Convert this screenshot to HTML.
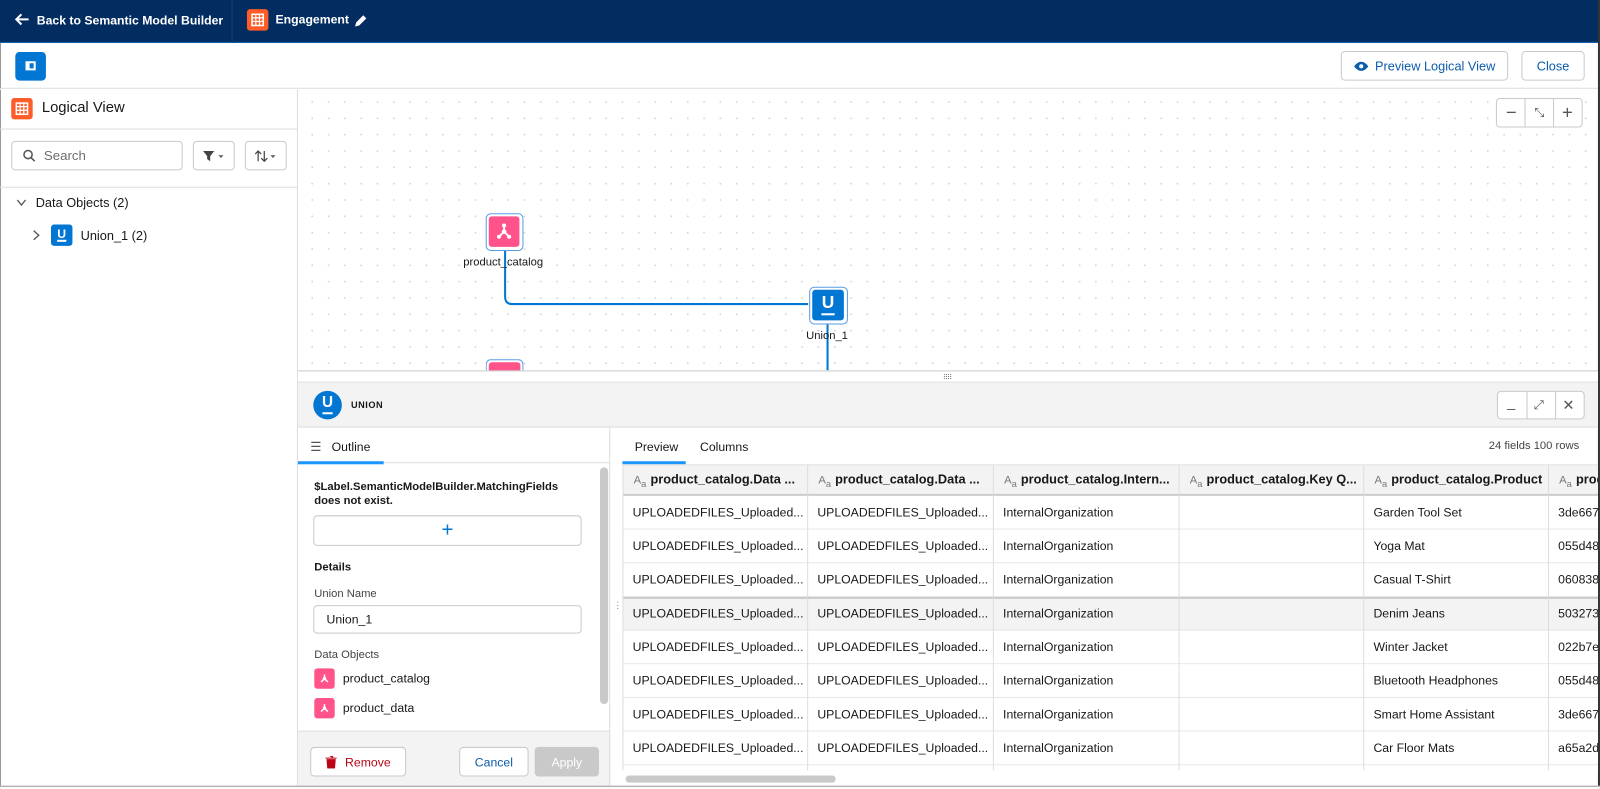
<!DOCTYPE html>
<html><head><meta charset="utf-8">
<style>
*{box-sizing:border-box;margin:0;padding:0}
body{width:1600px;height:788px;overflow:hidden;font-family:"Liberation Sans",sans-serif;color:#181818;background:#fff;position:relative;font-size:13px}
#w{position:absolute;left:0;top:0;width:1568px;height:773px;transform:scale(1.0204);transform-origin:0 0;overflow:hidden}
.a{position:absolute}
.btn{position:absolute;border:1px solid #c9c9c9;border-radius:4px;background:#fff;display:flex;align-items:center;justify-content:center}
.th{position:absolute;top:0;height:30px;border-right:1px solid #ddd;padding-left:10px;line-height:30px;font-weight:bold;font-size:12.5px;white-space:nowrap;overflow:hidden}
.th small{font-weight:normal;color:#777;font-size:11px;margin-right:4px}
.td{position:absolute;height:33px;line-height:33px;border-right:1px solid #ddd;padding-left:9px;font-size:12px;white-space:nowrap;overflow:hidden}
.row{position:absolute;left:0;width:1000px;height:33px;border-bottom:1px solid #e5e5e5}
</style></head><body><div id="w">
<div class="a" style="left:0;top:0;width:1568px;height:42px;background:#032d60;border-bottom:1px solid #0b5cab"></div>
<div class="a" style="left:14px;top:11px;color:#fff;font-size:12px;font-weight:bold;line-height:18px">
<svg width="16" height="14" viewBox="0 0 16 14" style="vertical-align:-2px;margin-right:6px"><path d="M14 7H3M7 2L2 7l5 5" stroke="#fff" stroke-width="2" fill="none"/></svg>Back to Semantic Model Builder</div>
<div class="a" style="left:227px;top:0;width:1px;height:42px;background:#163f73"></div>
<div class="a" style="left:242px;top:9px;width:21px;height:21px;background:#fe5c28;border-radius:3px">
<svg width="21" height="21" viewBox="0 0 21 21"><rect x="5" y="5" width="11" height="11" fill="none" stroke="#fff" stroke-width="1.5"/><path d="M5 8.5h11M5 12h11M8.7 5v11M12.3 5v11" stroke="#fff" stroke-width="1.2"/></svg></div>
<div class="a" style="left:270px;top:12px;color:#fff;font-weight:bold;font-size:12px">Engagement</div>
<svg class="a" style="left:347px;top:14px" width="13" height="13" viewBox="0 0 13 13"><path d="M1 12l1-4 7-7 3 3-7 7z" fill="#fff"/></svg>
<div class="a" style="left:0;top:42px;width:1568px;height:45px;border-bottom:1px solid #ddd;border-left:1px solid #999"></div>
<div class="a" style="left:15px;top:51px;width:30px;height:28px;background:#0176d3;border-radius:4px"><div class="a" style="left:10px;top:9px;width:10px;height:9px;border:2px solid #fff;border-left-width:4px"></div></div>
<div class="btn" style="left:1314px;top:50px;width:164px;height:29px;color:#0b5cab;font-size:12.5px"><svg width="14" height="10" viewBox="0 0 14 10" style="margin-right:7px"><path d="M0 5q7-9 14 0q-7 9-14 0z" fill="#0b5cab"/><circle cx="7" cy="5" r="2" fill="#fff"/></svg>Preview Logical View</div>
<div class="btn" style="left:1491px;top:50px;width:62px;height:29px;color:#0b5cab;font-size:12.5px">Close</div>
<div class="a" style="left:0;top:88px;width:292px;height:700px;border-right:1px solid #ddd;border-left:1px solid #999"></div>
<div class="a" style="left:11px;top:96px;width:21px;height:21px;background:#fe5c28;border-radius:3px">
<svg width="21" height="21" viewBox="0 0 21 21"><rect x="5" y="5" width="11" height="11" fill="none" stroke="#fff" stroke-width="1.5"/><path d="M5 8.5h11M5 12h11M8.7 5v11M12.3 5v11" stroke="#fff" stroke-width="1.2"/></svg></div>
<div class="a" style="left:41px;top:98px;font-size:14.5px">Logical View</div>
<div class="a" style="left:0;top:126px;width:291px;height:1px;background:#ddd"></div>
<div class="btn" style="left:11px;top:138px;width:168px;height:29px;justify-content:flex-start;padding-left:10px;color:#706e6b"><svg width="13" height="13" viewBox="0 0 13 13" style="margin-right:8px"><circle cx="5.5" cy="5.5" r="4" stroke="#555" stroke-width="1.5" fill="none"/><path d="M8.5 8.5l3.5 3.5" stroke="#555" stroke-width="1.5"/></svg>Search</div>
<div class="btn" style="left:189px;top:138px;width:41px;height:29px"><svg width="22" height="10" viewBox="0 0 22 10"><path d="M0 0h11l-4 5v5l-3-2v-3z" fill="#444"/><path d="M15 4h5l-2.5 3z" fill="#666"/></svg></div>
<div class="btn" style="left:240px;top:138px;width:41px;height:29px"><svg width="22" height="12" viewBox="0 0 22 12"><path d="M3 11V1M0 4l3-3 3 3M9 1v10M6 8l3 3 3-3" stroke="#444" stroke-width="1.2" fill="none"/><path d="M15 5h5l-2.5 3z" fill="#666"/></svg></div>
<div class="a" style="left:0;top:183px;width:291px;height:1px;background:#ddd"></div>
<svg class="a" style="left:16px;top:195px" width="10" height="8" viewBox="0 0 10 8"><path d="M1 1l4 5 4-5" stroke="#555" stroke-width="1.3" fill="none"/></svg>
<div class="a" style="left:35px;top:192px;font-size:12.5px">Data Objects (2)</div>
<svg class="a" style="left:32px;top:225px" width="8" height="11" viewBox="0 0 8 11"><path d="M1 1l5 4.5L1 10" stroke="#555" stroke-width="1.3" fill="none"/></svg>
<div class="a" style="left:50px;top:220px;width:21px;height:21px;background:#0176d3;border-radius:3px;color:#fff;text-align:center;font-weight:bold;font-size:12px;line-height:18px">U<div class="a" style="left:6px;top:15px;width:9px;height:1.5px;background:#fff"></div></div>
<div class="a" style="left:79px;top:224px;font-size:12.5px">Union_1 (2)</div>
<div class="a" style="left:292px;top:88px;width:1274px;height:275px;background-image:radial-gradient(circle,#d6d6d6 0.8px,transparent 1.1px);background-size:16px 16px;background-position:6px 4px"></div>
<div class="a" style="left:1566px;top:0;width:2px;height:773px;background:#333"></div>
<div class="btn" style="left:1466px;top:96px;width:85px;height:29px;justify-content:space-around;color:#555;font-size:18px"><span>−</span><span style="font-size:12px">⤡</span><span>+</span></div>
<div class="a" style="left:1494px;top:96px;width:1px;height:29px;background:#c9c9c9"></div>
<div class="a" style="left:1522px;top:96px;width:1px;height:29px;background:#c9c9c9"></div>
<svg class="a" style="left:292px;top:88px" width="1275" height="275"><path d="M203 157v46q0 7 7 7h290M519 229v46" stroke="#0176d3" stroke-width="2" fill="none"/></svg>
<div class="a" style="left:476px;top:209px;width:37px;height:37px;border:1.5px solid #5a9be6;border-radius:5px;background:#fff;padding:2px"><div style="width:30px;height:30px;background:#ff538a;border-radius:3px"><svg width="30" height="30" viewBox="0 0 30 30"><path d="M15 9v6l-5 5M15 15l5 5" stroke="#fff" stroke-width="1.8" fill="none"/><circle cx="15" cy="9" r="2" fill="#fff"/><circle cx="15" cy="15" r="2.3" fill="#fff"/><circle cx="10" cy="20" r="2" fill="#fff"/><circle cx="20" cy="20" r="2" fill="#fff"/></svg></div></div>
<div class="a" style="left:454px;top:251px;font-size:11px">product_catalog</div>
<div class="a" style="left:793px;top:281px;width:38px;height:37px;border:1.5px solid #5a9be6;border-radius:5px;background:#fff;padding:2px"><div style="width:31px;height:30px;background:#0176d3;border-radius:3px;color:#fff;text-align:center;font-weight:bold;font-size:17px;line-height:25px;position:relative">U<div class="a" style="left:9px;top:23px;width:13px;height:2px;background:#fff"></div></div></div>
<div class="a" style="left:790px;top:323px;font-size:11px">Union_1</div>
<div class="a" style="left:476px;top:352px;width:37px;height:12px;border:1.5px solid #5a9be6;border-bottom:none;border-radius:5px 5px 0 0;background:#fff;padding:2px 2px 0"><div style="height:10px;background:#ff538a;border-radius:3px 3px 0 0"></div></div>
<div class="a" style="left:292px;top:363px;width:1274px;height:12px;background:#fff;border-top:1px solid #ccc;border-bottom:1px solid #ddd"></div>
<div class="a" style="left:924px;top:366px;font-size:7px;color:#777;letter-spacing:-1px">⠿⠿</div>
<div class="a" style="left:292px;top:375px;width:1274px;height:44px;background:#f3f3f3;border-bottom:1px solid #ddd"></div>
<div class="a" style="left:307px;top:383px;width:28px;height:28px;background:#0176d3;border-radius:50%;color:#fff;text-align:center;font-weight:bold;font-size:15px;line-height:24px">U<div class="a" style="left:9px;top:21px;width:10px;height:1.5px;background:#fff"></div></div>
<div class="a" style="left:344px;top:392px;font-size:9px;font-weight:bold;letter-spacing:.5px">UNION</div>
<div class="btn" style="left:1467px;top:383px;width:86px;height:28px;justify-content:space-around;color:#555;font-size:14px"><span style="margin-top:-6px">_</span><span style="font-size:12px">⤢</span><span>✕</span></div>
<div class="a" style="left:1496px;top:383px;width:1px;height:28px;background:#c9c9c9"></div>
<div class="a" style="left:1524px;top:383px;width:1px;height:28px;background:#c9c9c9"></div>
<div class="a" style="left:292px;top:419px;width:306px;height:369px;border-right:1px solid #ddd"></div>
<div class="a" style="left:304px;top:431px;font-size:12px;color:#555">☰</div>
<div class="a" style="left:325px;top:431px;font-size:12px">Outline</div>
<div class="a" style="left:292px;top:453px;width:306px;height:1px;background:#ddd"></div>
<div class="a" style="left:292px;top:452px;width:84px;height:3px;background:#1b96ff"></div>
<div class="a" style="left:588px;top:458px;width:8px;height:232px;background:#c9c9c9;border-radius:4px"></div>
<div class="a" style="left:308px;top:470px;font-size:11px;font-weight:bold;line-height:14px">$Label.SemanticModelBuilder.MatchingFields<br>does not exist.</div>
<div class="btn" style="left:307px;top:505px;width:263px;height:30px;color:#0176d3;font-size:20px;font-weight:300">+</div>
<div class="a" style="left:308px;top:550px;font-size:11px;font-weight:bold">Details</div>
<div class="a" style="left:308px;top:576px;font-size:11px;color:#444">Union Name</div>
<div class="btn" style="left:307px;top:593px;width:263px;height:28px;justify-content:flex-start;padding-left:12px;font-size:12px">Union_1</div>
<div class="a" style="left:308px;top:636px;font-size:11px;color:#444">Data Objects</div>
<div class="a" style="left:308px;top:655px;width:20px;height:20px;background:#ff538a;border-radius:3px"><svg width="20" height="20" viewBox="0 0 30 30"><path d="M15 9v6l-5 5M15 15l5 5" stroke="#fff" stroke-width="2.2" fill="none"/><circle cx="15" cy="15" r="2.5" fill="#fff"/></svg></div>
<div class="a" style="left:336px;top:658px;font-size:12px">product_catalog</div>
<div class="a" style="left:308px;top:684px;width:20px;height:20px;background:#ff538a;border-radius:3px"><svg width="20" height="20" viewBox="0 0 30 30"><path d="M15 9v6l-5 5M15 15l5 5" stroke="#fff" stroke-width="2.2" fill="none"/><circle cx="15" cy="15" r="2.5" fill="#fff"/></svg></div>
<div class="a" style="left:336px;top:687px;font-size:12px">product_data</div>
<div class="a" style="left:292px;top:716px;width:306px;height:72px;background:#f3f3f3;border-top:1px solid #ddd;border-right:1px solid #ddd"></div>
<div class="btn" style="left:304px;top:732px;width:94px;height:29px;color:#ba0517;font-size:12px"><svg width="11" height="12" viewBox="0 0 11 12" style="margin-right:8px"><path d="M0 2h11M4 0h3v2M1.5 3.5h8l-.7 8.5H2.2z" fill="#ba0517" stroke="#ba0517" stroke-width="1"/></svg>Remove</div>
<div class="btn" style="left:450px;top:732px;width:68px;height:29px;color:#0b5cab;font-size:12px">Cancel</div>
<div class="btn" style="left:524px;top:732px;width:63px;height:29px;background:#c9c9c9;border-color:#c9c9c9;color:#fff;font-size:12px">Apply</div>
<div class="a" style="left:601px;top:588px;font-size:9px;color:#888">⋮</div>
<div class="a" style="left:622px;top:431px;font-size:12px">Preview</div>
<div class="a" style="left:686px;top:431px;font-size:12px">Columns</div>
<div class="a" style="left:610px;top:452px;width:62px;height:3px;background:#1b96ff"></div>
<div class="a" style="left:1459px;top:431px;font-size:11px;color:#444">24 fields 100 rows</div>
<div class="a" style="left:610px;top:455px;width:956px;height:300px;overflow:hidden;border-left:1px solid #ddd">
 <div class="a" style="left:0;top:0;width:1000px;height:31px;background:#f3f3f3;border-top:1px solid #ddd;border-bottom:2px solid #ccc"></div>
 <div class="th" style="left:0;width:181px"><small>A<sub>a</sub></small>product_catalog.Data ...</div>
 <div class="th" style="left:181px;width:182px"><small>A<sub>a</sub></small>product_catalog.Data ...</div>
 <div class="th" style="left:363px;width:182px"><small>A<sub>a</sub></small>product_catalog.Intern...</div>
 <div class="th" style="left:545px;width:181px"><small>A<sub>a</sub></small>product_catalog.Key Q...</div>
 <div class="th" style="left:726px;width:181px"><small>A<sub>a</sub></small>product_catalog.Product</div>
 <div class="th" style="left:907px;width:100px"><small>A<sub>a</sub></small>prod</div>
 <div id="rows"></div>
</div>
<div class="a" style="left:613px;top:760px;width:206px;height:7px;background:#c9c9c9;border-radius:4px"></div>
<div class="a" style="left:0;top:770px;width:1568px;height:3px;background:#fff;border-top:1px solid #999"></div>
</div>
<script>
var p=[["Garden Tool Set","3de667"],["Yoga Mat","055d48"],["Casual T-Shirt","060838"],["Denim Jeans","503273"],["Winter Jacket","022b7e"],["Bluetooth Headphones","055d48"],["Smart Home Assistant","3de667"],["Car Floor Mats","a65a2d"],["",""]];
var h="";p.forEach(function(r,i){var t=31+i*33;var bg=i==3?"#f3f3f3":"#fff";var bt=i==3?"border-top:2px solid #ccc;":"";
h+='<div class="row" style="top:'+t+'px;background:'+bg+';'+bt+'"></div>';
var c=[[0,181,"UPLOADEDFILES_Uploaded..."],[181,182,"UPLOADEDFILES_Uploaded..."],[363,182,"InternalOrganization"],[545,181,""],[726,181,r[0]],[907,100,r[1]]];
c.forEach(function(x){h+='<div class="td" style="top:'+t+'px;left:'+x[0]+'px;width:'+x[1]+'px">'+(i==8?"":x[2])+'</div>';});});
document.getElementById("rows").innerHTML=h;
</script>
</body></html>
